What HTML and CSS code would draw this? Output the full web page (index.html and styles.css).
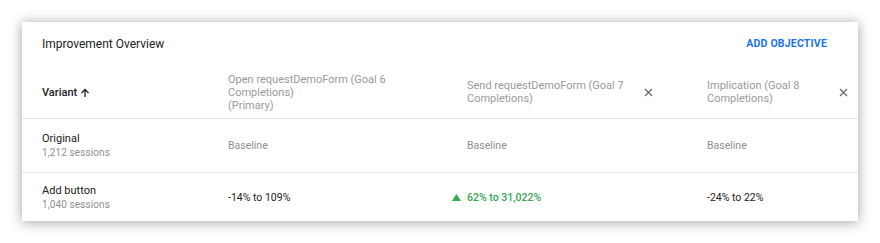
FILE: index.html
```html
<!DOCTYPE html>
<html>
<head>
<meta charset="utf-8">
<link rel="stylesheet" href="styles.css">
</head>
<body>
<div class="card">
  <div class="top">
    <div class="title">Improvement Overview</div>
    <div class="add">ADD OBJECTIVE</div>
  </div>
  <div class="grid">
    <div class="cell head first"><span class="variant">Variant</span>
      <svg class="arrow" width="10" height="10" viewBox="0 0 10 10"><path d="M5 9V1.5M1.5 5L5 1.5 8.5 5" fill="none" stroke="#222" stroke-width="1.3"/></svg>
    </div>
    <div class="cell head"><span class="hl w2">Open requestDemoForm (Goal 6 Completions)<br>(Primary)</span></div>
    <div class="cell head c3"><span class="hl w3">Send requestDemoForm (Goal 7 Completions)</span>
      <svg class="x" width="9" height="9" viewBox="0 0 9 9"><path d="M1 1L8 8M8 1L1 8" stroke="#666" stroke-width="1.2"/></svg>
    </div>
    <div class="cell head c4"><span class="hl w4">Implication (Goal 8 Completions)</span>
      <svg class="x" width="9" height="9" viewBox="0 0 9 9"><path d="M1 1L8 8M8 1L1 8" stroke="#666" stroke-width="1.2"/></svg>
    </div>

    <div class="cell row1 first"><div class="name">Original</div><div class="sess">1,212 sessions</div></div>
    <div class="cell row1 base">Baseline</div>
    <div class="cell row1 base">Baseline</div>
    <div class="cell row1 base">Baseline</div>

    <div class="cell row2 first"><div class="name">Add button</div><div class="sess">1,040 sessions</div></div>
    <div class="cell row2 val">-14% to 109%</div>
    <div class="cell row2 val up"><svg class="tri" width="9" height="7" viewBox="0 0 9 7"><path d="M4.5 0L9 7H0Z" fill="#34a853"/></svg>62% to 31,022%</div>
    <div class="cell row2 val">-24% to 22%</div>
  </div>
</div>
</body>
</html>
```

FILE: styles.css
```css
html, body {
  margin: 0;
  padding: 0;
  background: #fff;
}
body {
  padding: 22px;
  font-family: Roboto, "Liberation Sans", Arial, sans-serif;
  color: #212121;
}
.card {
  width: 836px;
  height: 199px;
  background: #fff;
  box-shadow: 0 1px 12px rgba(0, 0, 0, 0.38);
  box-sizing: border-box;
}
.top {
  height: 43px;
  display: flex;
  align-items: center;
  justify-content: space-between;
  padding: 0 31px 0 20px;
}
.title {
  font-size: 12px;
  color: #222;
}
.add {
  font-size: 10.5px;
  font-weight: 700;
  color: #1a73e8;
  letter-spacing: 0.2px;
}
.grid {
  display: grid;
  grid-template-columns: 206px 239px 240px 1fr;
}
.cell {
  display: flex;
  align-items: center;
}
.first {
  padding-left: 20px;
}
.head {
  height: 52px;
  padding-top: 1px;
  border-bottom: 1px solid #e6e6e6;
}
.row1 {
  height: 53px;
  border-bottom: 1px solid #e6e6e6;
}
.row2 {
  height: 49px;
}
.first.row1, .first.row2 {
  flex-direction: column;
  align-items: flex-start;
  justify-content: center;
}
.variant {
  font-size: 11px;
  font-weight: 500;
  color: #222;
}
.arrow {
  margin-left: 3px;
  margin-top: 1px;
}
.hl {
  font-size: 11px;
  line-height: 13px;
  color: #9a9a9a;
}
.w2 { width: 170px; }
.w3 { width: 170px; }
.w4 { width: 125px; }
.c3 { padding-right: 54px; justify-content: space-between; }
.c4 { padding-right: 10px; justify-content: space-between; }
.x { margin-top: 1px; }
.name {
  font-size: 11px;
  line-height: 14px;
  color: #222;
}
.sess {
  font-size: 10px;
  line-height: 13px;
  color: #8f8f8f;
  letter-spacing: 0.1px;
}
.base {
  font-size: 10.5px;
  color: #8f8f8f;
}
.val {
  font-size: 10.5px;
  color: #222;
}
.up {
  color: #34a853;
  font-weight: 500;
  margin-left: -15px;
}
.tri {
  margin-right: 6px;
}
```
